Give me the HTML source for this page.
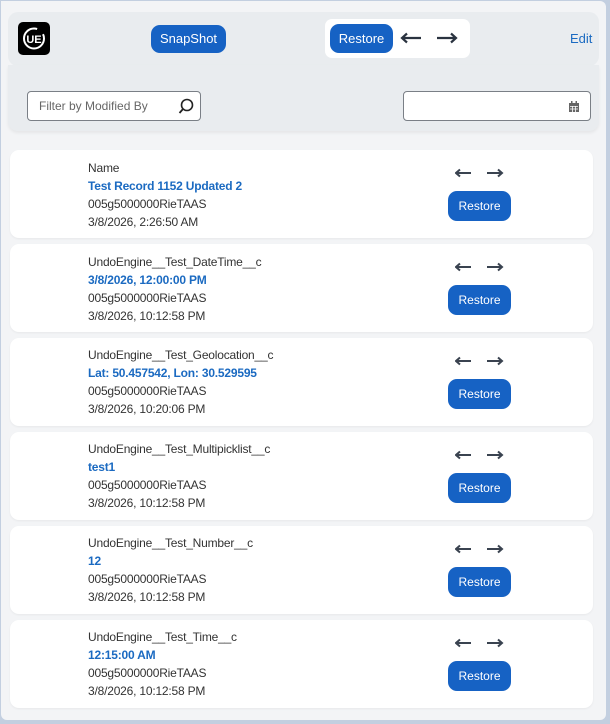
<!DOCTYPE html>
<html><head><meta charset="utf-8"><style>
*{box-sizing:border-box;margin:0;padding:0}
body{width:610px;height:724px;background:#c3cfe0;font-family:"Liberation Sans",sans-serif;overflow:hidden;position:relative}
.frame{position:absolute;left:1px;top:1px;width:605px;height:719px;background:#f3f4f6;border-radius:0 6px 6px 6px}
.hdr{position:absolute;left:8px;top:12px;width:591px;height:54px;background:#e9ecef;border-radius:10px}
.flt{position:absolute;left:8px;top:65px;width:591px;height:66px;background:#e9ecef;border-radius:0 0 10px 10px;box-shadow:0 2px 3px rgba(0,0,0,.06)}
.logo{position:absolute;left:18px;top:22px;width:32px;height:33px;background:#000;border-radius:5px}
.btn{position:absolute;background:#1662c4;color:#fff;font-size:13px;border-radius:9px;text-align:center}
.pill{position:absolute;left:325px;top:19px;width:145px;height:39px;background:#fff;border-radius:7px}
.edit{position:absolute;left:570px;top:31px;color:#1b6ac1;font-size:13px}
.in{position:absolute;background:#fff;border:1px solid #7a7f86;border-radius:4px;height:30px;top:91px}
.card{position:absolute;left:10px;width:583px;height:88px;background:#fff;border-radius:9px;box-shadow:0 1px 2px rgba(0,0,0,.05)}
.t{position:absolute;left:78px;font-size:12px;color:#333;line-height:18px;letter-spacing:-0.2px}
.t .b{color:#1b6ac1;font-weight:bold}
.ca{position:absolute;left:445px;top:18px}
.card .btn{left:438px;top:41px;width:63px;height:30px;line-height:30px;font-size:12px}
</style></head><body>
<div class="frame"></div>
<div class="hdr"></div>
<div class="flt"></div>
<div class="logo"><svg width="32" height="33" viewBox="0 0 32 33"><circle cx="16" cy="16.5" r="10" fill="none" stroke="#fff" stroke-width="2" stroke-dasharray="50 8"/><text x="16" y="21" font-size="11" font-weight="bold" fill="#fff" text-anchor="middle" font-family="Liberation Sans">UE</text></svg></div>
<div class="btn" style="left:151px;top:25px;width:75px;height:28px;line-height:28px">SnapShot</div>
<div class="pill"></div>
<div class="btn" style="left:330px;top:24px;width:63px;height:29px;line-height:29px">Restore</div>
<svg style="position:absolute;left:399px;top:32px" width="62" height="12" viewBox="0 0 62 12"><path d="M3 6h19M8 1.5L3 6l5 4.5" fill="none" stroke="#2a3340" stroke-width="2.2"/><path d="M38 6h19M52 1.5L57 6l-5 4.5" fill="none" stroke="#2a3340" stroke-width="2.2"/></svg>
<div class="edit">Edit</div>
<div class="in" style="left:27px;width:174px"><span style="position:absolute;left:11px;top:7px;font-size:12px;color:#666">Filter by Modified By</span>
<svg style="position:absolute;left:150px;top:6px" width="16" height="17" viewBox="0 0 16 17"><circle cx="9" cy="7" r="5.5" fill="none" stroke="#222" stroke-width="1.6"/><path d="M5 11L1.5 15" stroke="#222" stroke-width="1.8"/></svg></div>
<div class="in" style="left:403px;width:188px"><svg style="position:absolute;left:164px;top:9px" width="12" height="12" viewBox="0 0 12 12"><rect x="1" y="2" width="10" height="9" fill="#666"/><rect x="3" y="0" width="1.5" height="3" fill="#666"/><rect x="7.5" y="0" width="1.5" height="3" fill="#666"/><path d="M2 5.5h8M2 8h8M4.5 5v6M7.5 5v6" stroke="#fff" stroke-width=".8"/></svg></div>

<svg width="0" height="0" style="position:absolute"><defs><g id="ar"><path d="M1 5h15M5 1.5L1 5l4 3.5" fill="none" stroke="#3a4350" stroke-width="2"/><path d="M32 5h15M43 1.5L47 5l-4 3.5" fill="none" stroke="#3a4350" stroke-width="2"/></g></defs></svg>

<div class="card" style="top:150px"><div class="t" style="top:9px">Name<br><span class="b">Test Record 1152 Updated 2</span><br>005g5000000RieTAAS<br>3/8/2026, 2:26:50 AM</div><svg class="ca" width="50" height="10"><use href="#ar"/></svg><div class="btn">Restore</div></div>
<div class="card" style="top:244px"><div class="t" style="top:9px">UndoEngine__Test_DateTime__c<br><span class="b">3/8/2026, 12:00:00 PM</span><br>005g5000000RieTAAS<br>3/8/2026, 10:12:58 PM</div><svg class="ca" width="50" height="10"><use href="#ar"/></svg><div class="btn">Restore</div></div>
<div class="card" style="top:338px"><div class="t" style="top:8px">UndoEngine__Test_Geolocation__c<br><span class="b">Lat: 50.457542, Lon: 30.529595</span><br>005g5000000RieTAAS<br>3/8/2026, 10:20:06 PM</div><svg class="ca" width="50" height="10"><use href="#ar"/></svg><div class="btn">Restore</div></div>
<div class="card" style="top:432px"><div class="t" style="top:8px">UndoEngine__Test_Multipicklist__c<br><span class="b">test1</span><br>005g5000000RieTAAS<br>3/8/2026, 10:12:58 PM</div><svg class="ca" width="50" height="10"><use href="#ar"/></svg><div class="btn">Restore</div></div>
<div class="card" style="top:526px"><div class="t" style="top:8px">UndoEngine__Test_Number__c<br><span class="b">12</span><br>005g5000000RieTAAS<br>3/8/2026, 10:12:58 PM</div><svg class="ca" width="50" height="10"><use href="#ar"/></svg><div class="btn">Restore</div></div>
<div class="card" style="top:620px"><div class="t" style="top:8px">UndoEngine__Test_Time__c<br><span class="b">12:15:00 AM</span><br>005g5000000RieTAAS<br>3/8/2026, 10:12:58 PM</div><svg class="ca" width="50" height="10"><use href="#ar"/></svg><div class="btn">Restore</div></div>
</body></html>
